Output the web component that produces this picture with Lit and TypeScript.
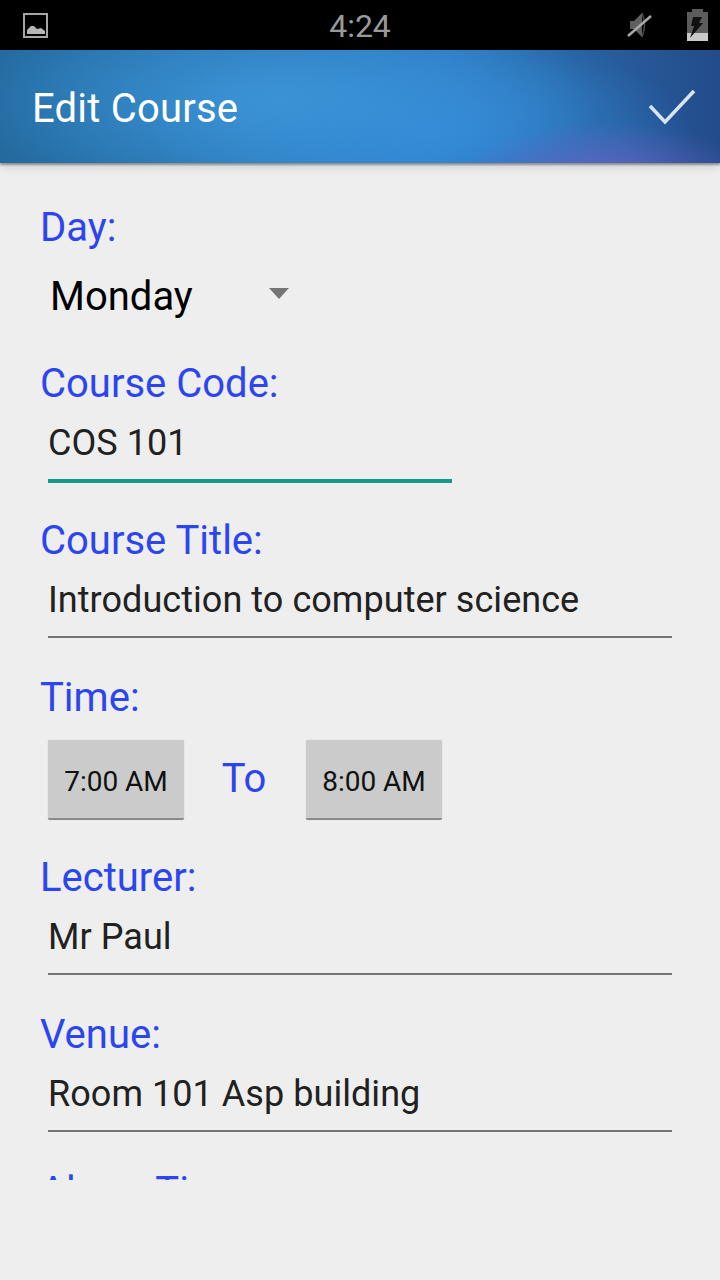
import { LitElement, html, css } from 'lit';
import { customElement } from 'lit/decorators.js';

@customElement('app-root')
export class AppRoot extends LitElement {
  static styles = css`
    :host {
      display: block;
      width: 720px;
      height: 1280px;
      background: #eeeeee;
      font-family: Roboto, "Liberation Sans", sans-serif;
      overflow: hidden;
    }
    .status {
      height: 50px;
      background: #000;
      display: flex;
      align-items: center;
      position: relative;
    }
    .status .pic { margin-left: 23px; }
    .status .time {
      position: absolute;
      left: 0;
      right: 0;
      top: 5px;
      text-align: center;
      color: #9a9a9a;
      font-size: 32px;
      line-height: 42px;
    }
    .status .right {
      margin-left: auto;
      display: flex;
      align-items: center;
      gap: 35px;
      margin-right: 12px;
    }
    .appbar {
      height: 113px;
      box-sizing: border-box;
      display: flex;
      align-items: center;
      justify-content: space-between;
      padding: 3px 24px 0 32px;
      position: relative;
      z-index: 1;
      color: #fff;
      font-size: 40px;
      letter-spacing: 0.2px;
      background:
        radial-gradient(ellipse 150px 60px at 605px 132px, rgba(108, 100, 200, 0.9), rgba(108, 100, 200, 0) 100%),
        radial-gradient(ellipse 320px 100px at 280px 50px, #3b93d6 0%, rgba(58, 147, 214, 0) 100%),
        radial-gradient(ellipse 270px 100px at 420px 80px, #3189d9 0%, rgba(49, 137, 217, 0) 100%),
        linear-gradient(90deg, #246a9f 0%, #2a79b6 35%, #2b78bd 62%, #28609f 82%, #234b8b 100%);
      box-shadow: 0 2px 2px rgba(0, 0, 0, 0.35), 0 4px 10px rgba(0, 0, 0, 0.12);
    }
    .appbar svg { display: block; margin-top: -3px; }
    .scroll {
      height: 1017px;
      box-sizing: border-box;
      overflow: hidden;
      padding: 42px 48px 0 40px;
    }
    .label {
      color: #2b46ee;
      font-size: 40px;
      line-height: 46px;
    }
    .spinner {
      display: flex;
      align-items: center;
      height: 68px;
      margin: 11px 0 31px;
      padding-left: 10px;
      font-size: 40px;
      color: #000;
    }
    .spinner .arrow {
      width: 0;
      height: 0;
      margin-left: 76px;
      margin-bottom: 6px;
      border-left: 10px solid transparent;
      border-right: 10px solid transparent;
      border-top: 11px solid #757575;
    }
    .field {
      margin: 0 0 37px 8px;
      height: 74px;
      box-sizing: border-box;
      border-bottom: 2px solid #757575;
      padding-top: 13px;
      font-size: 36px;
      line-height: 46px;
      letter-spacing: 0.05px;
      color: #212121;
    }
    .field.focus {
      width: 404px;
      border-bottom: 4px solid #159a89;
      height: 76px;
      margin-bottom: 35px;
    }
    .times {
      display: flex;
      align-items: center;
      margin: 19px 0 35px 8px;
    }
    .times .to {
      color: #2b46ee;
      font-size: 40px;
      line-height: 46px;
      width: 120px;
      padding-right: 2px;
      text-align: center;
      margin-bottom: 3px;
    }
    .btn {
      width: 136px;
      height: 80px;
      box-sizing: border-box;
      padding-top: 4px;
      background: #cbcbcb;
      border-radius: 2px;
      border-bottom: 2px solid #8a8a8a;
      box-shadow: 0 0 1px rgba(0, 0, 0, 0.25);
      display: flex;
      align-items: center;
      justify-content: center;
      font-size: 28px;
      color: #111;
    }
  `;

  render() {
    return html`
      <div class="status">
        <svg class="pic" width="25" height="25" viewBox="0 0 25 25">
          <rect x="1" y="1" width="23" height="23" fill="none" stroke="#a6a6a6" stroke-width="2" />
          <path d="M4 21 L4 17 L8 13 L11 13 L14 16 L18 15 L22 18 L22 21 Z" fill="#b5b5b5" />
        </svg>
        <div class="time">4:24</div>
        <div class="right">
          <svg width="25" height="26" viewBox="0 0 25 26">
            <path d="M3 9 L7 9 L15 1 L15 25 L7 17 L3 17 Z" fill="#5f5f5f" />
            <path d="M15 1 Q20 13 15 25" fill="none" stroke="#4a4a4a" stroke-width="1.5" />
            <path d="M1 24 L24 4" stroke="#a8a8a8" stroke-width="2.5" />
          </svg>
          <svg width="21" height="32" viewBox="0 0 21 32">
            <path d="M5 0 H16 V3 H21 V32 H0 V3 H5 Z" fill="#5c5c5c" />
            <rect x="0" y="24" width="21" height="8" fill="#c9c9c9" />
            <path d="M6 8 H15 L12 14 H16 L3 29 L7 17 H4 Z" fill="#111" />
          </svg>
        </div>
      </div>
      <div class="appbar">
        <span>Edit Course</span>
        <svg width="48" height="36" viewBox="0 0 48 36">
          <path d="M2 17 L17 33 L46 2" fill="none" stroke="#dbe4f6" stroke-width="3.5" />
        </svg>
      </div>
      <div class="scroll">
        <div class="label">Day:</div>
        <div class="spinner"><span>Monday</span><span class="arrow"></span></div>
        <div class="label">Course Code:</div>
        <div class="field focus">COS 101</div>
        <div class="label">Course Title:</div>
        <div class="field">Introduction to computer science</div>
        <div class="label">Time:</div>
        <div class="times">
          <div class="btn">7:00 AM</div>
          <div class="to">To</div>
          <div class="btn">8:00 AM</div>
        </div>
        <div class="label">Lecturer:</div>
        <div class="field">Mr Paul</div>
        <div class="label">Venue:</div>
        <div class="field">Room 101 Asp building</div>
        <div class="label">Alarm Time:</div>
      </div>
    `;
  }
}
